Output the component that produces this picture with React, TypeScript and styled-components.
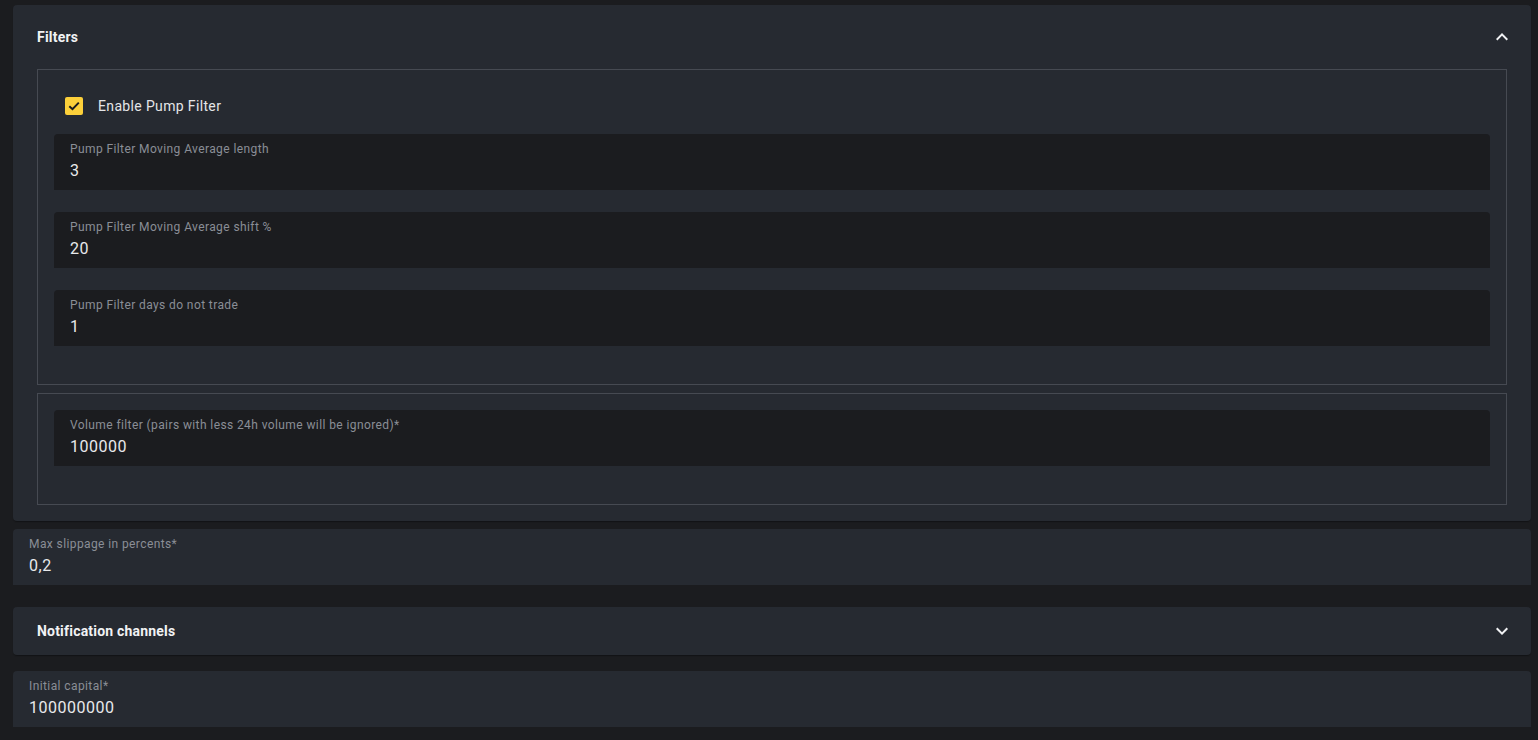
import React from "react";
import styled, { createGlobalStyle } from "styled-components";

const GlobalStyle = createGlobalStyle`
  html, body {
    margin: 0;
    padding: 0;
    background: #1b1c1f;
    font-family: Roboto, "Liberation Sans", Arial, sans-serif;
    color: #e6e7e9;
  }
  * { box-sizing: border-box; }
`;

const Page = styled.div`
  padding: 5px 7px 0 13px;
  display: flex;
  flex-direction: column;
  min-height: 740px;
`;

const Card = styled.section<{ $mt?: number }>`
  background: #262a31;
  border-radius: 4px;
  margin-top: ${(p) => p.$mt ?? 0}px;
  box-shadow: 0 2px 1px -1px rgba(0, 0, 0, 0.2), 0 1px 1px rgba(0, 0, 0, 0.14);
`;

const Header = styled.div<{ $h: number }>`
  height: ${(p) => p.$h}px;
  display: flex;
  align-items: center;
  justify-content: space-between;
  padding: 0 17px 0 24px;
`;

const Title = styled.span`
  font-size: 14px;
  font-weight: 700;
  color: #f1f2f4;
  letter-spacing: 0.2px;
`;

const Details = styled.div`
  padding: 0 24px 16px;
  display: flex;
  flex-direction: column;
  gap: 8px;
`;

const Group = styled.div<{ $pt: number }>`
  border: 1px solid #464a52;
  padding: ${(p) => p.$pt}px 16px 16px;
  display: flex;
  flex-direction: column;
`;

const CheckRow = styled.label`
  height: 42px;
  display: flex;
  align-items: center;
  gap: 15px;
  padding-left: 11px;
  margin-bottom: 7px;
  font-size: 14px;
  letter-spacing: 0.35px;
  color: #e4e5e7;
`;

const Box = styled.span`
  width: 18px;
  height: 18px;
  display: inline-flex;
  align-items: center;
  justify-content: center;
  background: #fcd03a;
  border-radius: 2px;
`;

const Field = styled.div<{ $variant: "dark" | "card"; $mb?: number; $mt?: number }>`
  height: 56px;
  background: ${(p) => (p.$variant === "dark" ? "#1b1c1f" : "#262a31")};
  border-radius: 4px 4px 0 0;
  padding: 8px 16px 0;
  margin-bottom: ${(p) => p.$mb ?? 0}px;
  margin-top: ${(p) => p.$mt ?? 0}px;
  display: flex;
  flex-direction: column;
`;

const FieldLabel = styled.span`
  font-size: 12px;
  line-height: 14px;
  color: #8a8e96;
  letter-spacing: 0.4px;
`;

const FieldValue = styled.span`
  margin-top: 3px;
  font-size: 16px;
  line-height: 23px;
  color: #e8e9eb;
  letter-spacing: 0.5px;
`;

const Chevron = ({ up }: { up?: boolean }) => (
  <svg width="24" height="24" viewBox="0 0 24 24" style={{ transform: up ? "rotate(180deg)" : undefined }}>
    <path fill="#f1f2f4" d="M16.59 8.59 12 13.17 7.41 8.59 6 10l6 6 6-6z" />
  </svg>
);

const TextField = ({
  label,
  value,
  variant,
  mb,
  mt,
}: {
  label: string;
  value: string;
  variant: "dark" | "card";
  mb?: number;
  mt?: number;
}) => (
  <Field $variant={variant} $mb={mb} $mt={mt}>
    <FieldLabel>{label}</FieldLabel>
    <FieldValue>{value}</FieldValue>
  </Field>
);

export default function App() {
  return (
    <>
      <GlobalStyle />
      <Page>
        <Card>
          <Header $h={64}>
            <Title>Filters</Title>
            <Chevron up />
          </Header>
          <Details>
            <Group $pt={15}>
              <CheckRow>
                <Box>
                  <svg width="14" height="14" viewBox="0 0 14 14">
                    <path d="M2.3 7.2 5.5 10.2 11.8 3.6" fill="none" stroke="#1b1c1f" strokeWidth="2" />
                  </svg>
                </Box>
                Enable Pump Filter
              </CheckRow>
              <TextField variant="dark" mb={22} label="Pump Filter Moving Average length" value="3" />
              <TextField variant="dark" mb={22} label="Pump Filter Moving Average shift %" value="20" />
              <TextField variant="dark" mb={22} label="Pump Filter days do not trade" value="1" />
            </Group>
            <Group $pt={16}>
              <TextField
                variant="dark"
                mb={22}
                label="Volume filter (pairs with less 24h volume will be ignored)*"
                value="100000"
              />
            </Group>
          </Details>
        </Card>
        <TextField variant="card" mt={8} label="Max slippage in percents*" value="0,2" />
        <Card $mt={22}>
          <Header $h={48}>
            <Title>Notification channels</Title>
            <Chevron />
          </Header>
        </Card>
        <TextField variant="card" mt={16} label="Initial capital*" value="100000000" />
      </Page>
    </>
  );
}
